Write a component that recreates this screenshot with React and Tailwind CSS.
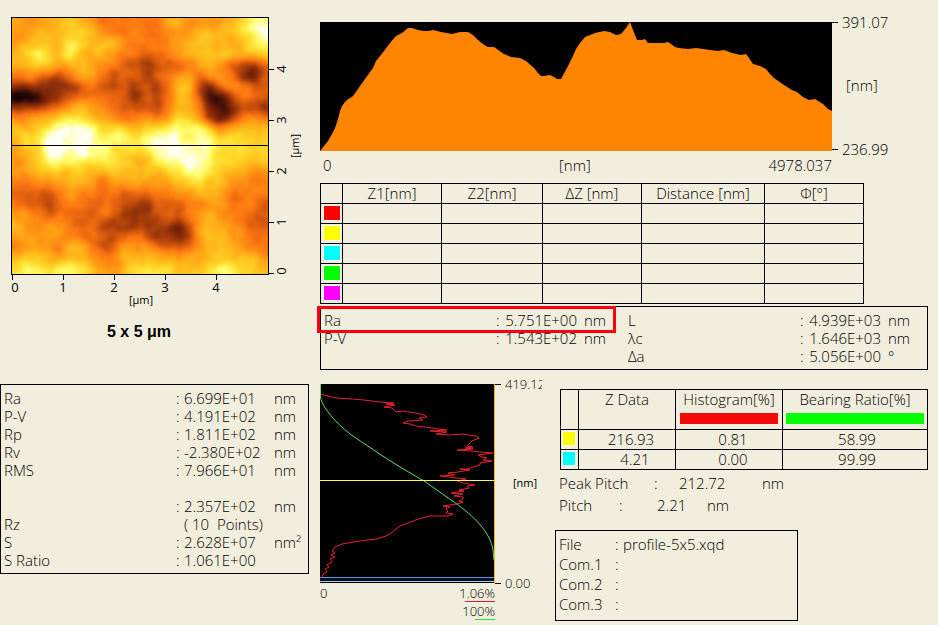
import React from "react";

// Surface heights of the scan, 0 (lowest) to a (highest), one character a cell.
const HEIGHTS = [
  "666777765555556766667899",
  "66777787655555566777789a",
  "677778877765555677777789",
  "789879777655455677777778",
  "778767766544344456764334",
  "555445665444345664665324",
  "333223454343435774256544",
  "001234555443435774113544",
  "333456766544435775212443",
  "667789876655656886313565",
  "7789aaa98887889999867777",
  "788aaaaa99989aaa99988887",
  "678aaaa9988889aaa9988888",
  "6789999888877899aa988777",
  "667777777877778899877766",
  "555667765667666788776655",
  "444456555544455667765555",
  "544355545443344455665554",
  "665455445433344456765544",
  "766665453333333246776544",
  "666665554445433236776655",
  "566657754466654456777655",
  "787767765577776676777776",
  "898899876678888777899877",
];

const SPAN = 257;
const CELL = SPAN / 24;

const PROFILE =
  "0,129 8,119 12,112 15,106 18,97 20,89 22,84 25,80 28,77 32,75 36,70 40,64 45,57 50,50 53,46 56,39 64,29 70,21 76,14 82,11 88,6 92,6 98,8 104,9 108,9 113,8 121,10 132,12 140,10 148,10 153,13 158,18 163,22 168,25 174,25 184,32 191,35 200,36 206,39 214,46 218,51 221,54 224,54 230,53 234,55 237,57 241,57 247,46 252,36 256,27 260,21 265,15 275,11 284,9 290,10 296,13 301,12 306,6 310,0 313,8 317,18 322,18 325,17 328,21 344,21 348,20 351,22 355,25 359,26 368,27 376,26 390,28 398,29 404,28 412,31 421,33 426,32 429,36 433,42 440,44 446,47 450,52 454,56 464,63 472,68 477,70 483,75 489,78 495,77 503,82 508,87 512,89 512,129";

const HISTOGRAM =
  "0,10 8,12 16,14 32,15 44,16 60,18 74,19 66,20 75,21 64,23 72,24 76,28 82,27 96,29 104,31 107,33 99,34 103,36 88,37 83,39 90,40 96,42 112,44 118,45 127,46 110,47 127,48 116,50 130,51 142,50 156,52 159,54 152,57 147,62 153,63 145,64 153,65 137,66 151,67 160,68 173,69 158,71 162,73 167,74 163,76 172,77 160,79 160,81 147,85 140,85 150,86 138,88 128,89 135,91 120,92 137,94 146,95 137,97 143,99 155,101 147,102 149,104 139,106 144,107 131,109 143,110 134,112 143,113 143,115 139,117 143,118 137,120 123,122 130,123 126,125 128,127 126,129 133,130 128,132 110,132 98,135 88,139 80,142 76,145 70,150 66,152 56,155 47,156 34,158 22,160 15,163 12,167 15,169 11,171 15,173 10,175 12,178 7,181 9,183 5,185 7,188 3,190 2,194";

const font = "font-['Open_Sans','Noto_Sans',sans-serif] font-light";

function Scan() {
  const cells = [];
  for (let r = -1; r <= 24; r++) {
    for (let c = -1; c <= 24; c++) {
      const row = HEIGHTS[Math.min(23, Math.max(0, r))];
      const v = parseInt(row[Math.min(23, Math.max(0, c))], 11);
      const g = Math.round((v * 255) / 10);
      cells.push(
        <rect key={`${r},${c}`} x={c * CELL} y={r * CELL} width={CELL + 1} height={CELL + 1} fill={`rgb(${g},${g},${g})`} />
      );
    }
  }
  return (
    <svg width="309" height="310" viewBox="0 0 309 310" className="block" role="img" aria-label="Surface scan">
      <defs>
        <filter id="relief" filterUnits="userSpaceOnUse" x="-10" y="-10" width="278" height="278" colorInterpolationFilters="sRGB">
          <feGaussianBlur in="SourceGraphic" stdDeviation="4" result="soft" />
          <feTurbulence type="fractalNoise" baseFrequency="0.06" numOctaves="2" seed="4" result="noise" />
          <feColorMatrix in="noise" type="matrix" values="1 0 0 0 0 1 0 0 0 0 1 0 0 0 0 0 0 0 0 1" result="grey" />
          <feComposite in="soft" in2="grey" operator="arithmetic" k1="0" k2="1" k3="0.16" k4="-0.07" result="mix" />
          <feComponentTransfer in="mix">
            <feFuncR type="table" tableValues="0 0.16 0.42 0.6 0.83 0.99 1 1 1 1 1" />
            <feFuncG type="table" tableValues="0 0.03 0.11 0.21 0.34 0.46 0.59 0.72 0.86 0.99 1" />
            <feFuncB type="table" tableValues="0 0.03 0.03 0.04 0.05 0.07 0.08 0.1 0.17 0.42 0.95" />
            <feFuncA type="linear" slope="0" intercept="1" />
          </feComponentTransfer>
        </filter>
        <clipPath id="frame">
          <rect width="257" height="257" />
        </clipPath>
      </defs>
      <g transform="translate(12 17)" clipPath="url(#frame)">
        <g filter="url(#relief)">{cells}</g>
      </g>
      <g fill="none" stroke="#000">
        <rect x="11.5" y="17.5" width="257" height="257" />
        <path d="M12 145.5H268M12.5 275v5M63.5 275v5M114.5 275v5M165.5 275v5M216.5 275v5M269 69.5h5M269 120.5h5M269 171.5h5M269 222.5h5M269 273.5h5" />
      </g>
      <g className="text-[13px] font-normal" textAnchor="middle">
        <text x="15" y="292">0</text>
        <text x="63" y="292">1</text>
        <text x="114" y="292">2</text>
        <text x="165" y="292">3</text>
        <text x="216" y="292">4</text>
        <text transform="translate(286 271) rotate(-90)">0</text>
        <text transform="translate(286 222) rotate(-90)">1</text>
        <text transform="translate(286 171) rotate(-90)">2</text>
        <text transform="translate(286 120) rotate(-90)">3</text>
        <text transform="translate(286 69) rotate(-90)">4</text>
      </g>
      <g className="text-[11px] font-normal" textAnchor="middle">
        <text x="141" y="304">[µm]</text>
        <text transform="translate(299 146) rotate(-90)">[µm]</text>
      </g>
    </svg>
  );
}

function Profile() {
  return (
    <svg width="590" height="161" viewBox="0 0 590 161" className="block overflow-visible" role="img" aria-label="Height profile">
      <rect width="512" height="129" fill="#000" />
      <polygon points={PROFILE} fill="#ff8400" />
      <path d="M512 .5h6M512 127.5h6" stroke="#000" />
      <g className="text-[15px]">
        <text x="522" y="6">391.07</text>
        <text x="526" y="69">[nm]</text>
        <text x="522" y="133">236.99</text>
        <text x="3" y="149">0</text>
        <text x="239" y="149">[nm]</text>
        <text x="512" y="149" textAnchor="end">4978.037</text>
      </g>
    </svg>
  );
}

function Distribution() {
  return (
    <svg width="222" height="249" viewBox="0 -8 222 249" className="block" role="img" aria-label="Height distribution">
      <rect width="175" height="199" fill="#000" />
      <rect y="194" width="175" height="3" fill="#04101c" />
      <rect y="193" width="175" height="1" fill="#5a96f0" />
      <rect y="197" width="175" height="1" fill="#a8d0e8" />
      <polyline points={HISTOGRAM} fill="none" stroke="#e8242e" />
      <path d="M.5 0V14C3 24 15 38 30 50C45 60 62 72 80 83L104 97L134 118C155 133 170 148 173 166L174 176" fill="none" stroke="#5fe068" />
      <rect y="96" width="175" height="1" fill="#ffff50" />
      <rect x="174" width="1" height="199" fill="#ffb428" />
      <path d="M175 .5h6M175 199.500h6" stroke="#000" />
      <g className="text-[13px]">
        <text x="185" y="5">419.12</text>
        <text x="185" y="204">0.00</text>
        <text x="0" y="214">0</text>
        <text x="175" y="214" textAnchor="end">1.06%</text>
        <text x="175" y="232" textAnchor="end">100%</text>
      </g>
      <text x="193" y="103" className="text-[11px] font-normal">[nm]</text>
      <rect x="145" y="217" width="30" height="1" fill="#e02020" />
      <rect x="155" y="235" width="20" height="1" fill="#28e028" />
    </svg>
  );
}

const MARKERS = [
  ["red", "bg-[#fe0000]"],
  ["yellow", "bg-[#ffff00]"],
  ["cyan", "bg-[#00ffff]"],
  ["green", "bg-[#00ff00]"],
  ["magenta", "bg-[#ff00ff]"],
];

function MarkerTable() {
  const cell = "border border-black p-0";
  return (
    <table className="w-[544px] table-fixed border-collapse text-center leading-[19px]">
      <colgroup>
        <col className="w-[22px]" />
        <col className="w-[99px]" />
        <col className="w-[101px]" />
        <col className="w-[99px]" />
        <col className="w-[123px]" />
        <col className="w-[99px]" />
      </colgroup>
      <thead>
        <tr className="h-5">
          <td className={cell} />
          {["Z1[nm]", "Z2[nm]", "ΔZ [nm]", "Distance [nm]", "Φ[°]"].map((h) => (
            <th key={h} scope="col" className={`${cell} font-light`}>{h}</th>
          ))}
        </tr>
      </thead>
      <tbody className="align-top">
        {MARKERS.map(([name, color]) => (
          <tr key={name} className="h-5">
            <td className={`${cell} pt-[2px]`}>
              <span className={`mx-auto block h-[14px] w-4 ring-1 ring-white/70 ${color}`} />
            </td>
            <td className={cell} />
            <td className={cell} />
            <td className={cell} />
            <td className={cell} />
            <td className={cell} />
          </tr>
        ))}
      </tbody>
    </table>
  );
}

function Reading({ label, value, unit }) {
  return (
    <div className="grid grid-cols-[172px_8px_73px_1fr]">
      <dt>{label}</dt>
      <dd>:</dd>
      <dd className="text-right">{value}</dd>
      <dd className="pl-[7px]">{unit}</dd>
    </div>
  );
}

function ProfileReadings() {
  return (
    <div className="relative mr-[10px] flex h-16 border border-black pt-1 pl-[3px] leading-[18px]">
      <dl className="w-[304px]">
        <Reading label="Ra" value="5.751E+00" unit="nm" />
        <Reading label="P-V" value="1.543E+02" unit="nm" />
      </dl>
      <dl className="flex-1">
        <Reading label="L" value="4.939E+03" unit="nm" />
        <Reading label="λc" value="1.646E+03" unit="nm" />
        <Reading label="Δa" value="5.056E+00" unit="°" />
      </dl>
      <div className="absolute -top-px -left-1 h-[27px] w-[299px] border-[3px] border-[#f80010]" />
    </div>
  );
}

const SURFACE = [
  ["Ra", ":", "6.699E+01", "nm"],
  ["P-V", ":", "4.191E+02", "nm"],
  ["Rp", ":", "1.811E+02", "nm"],
  ["Rv", ":", "-2.380E+02", "nm"],
  ["RMS", ":", "7.966E+01", "nm"],
  ["", "", "", ""],
  ["", ":", "2.357E+02", "nm"],
  ["Rz", "", "( 10  Points)", ""],
  ["S", ":", "2.628E+07", "nm²"],
  ["S Ratio", ":", "1.061E+00", ""],
];

function SurfaceReadings() {
  return (
    <dl className="h-[190px] w-[309px] shrink-0 border border-black pt-1 pl-[3px] leading-[18px]">
      {SURFACE.map(([label, colon, value, unit], i) => (
        <div key={i} className="grid h-[18px] grid-cols-[172px_8px_90px_1fr] whitespace-pre">
          <dt>{label}</dt>
          <dd>{colon}</dd>
          <dd>{value}</dd>
          <dd>{unit}</dd>
        </div>
      ))}
    </dl>
  );
}

function CursorTable() {
  const cell = "border border-black p-0";
  return (
    <table className="ml-[5px] w-[368px] table-fixed border-collapse text-center leading-[18px]">
      <colgroup>
        <col className="w-[18px]" />
        <col className="w-[97px]" />
        <col className="w-[107px]" />
        <col className="w-[145px]" />
      </colgroup>
      <thead>
        <tr className="h-10 align-top">
          <td className={cell} />
          <th scope="col" className={`${cell} font-light`}>Z Data</th>
          <th scope="col" className={`${cell} px-1 font-light`}>
            Histogram[%]
            <span className="mt-[5px] block h-[11px] bg-[#f50808]" />
          </th>
          <th scope="col" className={`${cell} px-[3px] font-light`}>
            Bearing Ratio[%]
            <span className="mt-[5px] block h-[11px] bg-[#00ff00]" />
          </th>
        </tr>
      </thead>
      <tbody className="align-top">
        <tr className="h-5">
          <td className={`${cell} pt-[2px]`}><span className="ml-[2px] block h-[13px] w-3 bg-[#ffff00] ring-1 ring-white/50" /></td>
          <td className={`${cell} pl-2`}>216.93</td>
          <td className={`${cell} pl-2`}>0.81</td>
          <td className={`${cell} pl-1`}>58.99</td>
        </tr>
        <tr className="h-5">
          <td className={`${cell} pt-[2px]`}><span className="ml-[2px] block h-[13px] w-3 bg-[#00ffff] ring-1 ring-white/50" /></td>
          <td className={`${cell} pl-4`}>4.21</td>
          <td className={`${cell} pl-2`}>0.00</td>
          <td className={`${cell} pl-1`}>99.99</td>
        </tr>
      </tbody>
    </table>
  );
}

export default function App() {
  return (
    <main className={`min-h-screen bg-[#f2eedd] text-[15px] text-black ${font}`}>
      <div className="flex h-[384px]">
        <figure className="w-[320px] shrink-0">
          <Scan />
          <figcaption className="w-[278px] pt-3 text-center font-['Liberation_Sans',Arial,sans-serif] text-[16px] leading-5 font-bold">
            5 x 5 μm
          </figcaption>
        </figure>
        <section className="min-w-0 flex-1 pt-[22px]">
          <Profile />
          <MarkerTable />
          <div className="pt-[2px]">
            <ProfileReadings />
          </div>
        </section>
      </div>
      <div className="flex">
        <SurfaceReadings />
        <div className="-mt-2 ml-[11px] w-[235px] shrink-0">
          <Distribution />
        </div>
        <section className="min-w-0 flex-1 pt-[5px]">
          <CursorTable />
          <dl className="pt-[2px] pl-1 leading-[22px]">
            <div className="grid grid-cols-[95px_25px_83px_1fr]">
              <dt>Peak Pitch</dt>
              <dd>:</dd>
              <dd>212.72</dd>
              <dd>nm</dd>
            </div>
            <div className="grid grid-cols-[60px_38px_50px_1fr]">
              <dt>Pitch</dt>
              <dd>:</dd>
              <dd>2.21</dd>
              <dd>nm</dd>
            </div>
          </dl>
          <dl className="mt-[14px] h-[91px] w-[243px] border border-black pt-[3px] pl-[3px] leading-5">
            {[
              ["File", "profile-5x5.xqd"],
              ["Com.1", ""],
              ["Com.2", ""],
              ["Com.3", ""],
            ].map(([label, value]) => (
              <div key={label} className="grid grid-cols-[56px_8px_1fr]">
                <dt>{label}</dt>
                <dd>:</dd>
                <dd>{value}</dd>
              </div>
            ))}
          </dl>
        </section>
      </div>
    </main>
  );
}
